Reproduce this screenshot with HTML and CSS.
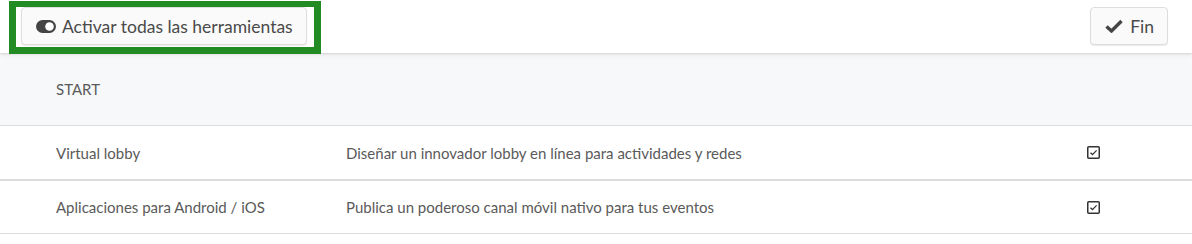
FILE: index.html
```html
<!DOCTYPE html>
<html lang="es">
<head>
    <meta charset="UTF-8">
    <title>Herramientas</title>
    <link rel="stylesheet" href="styles.css">
</head>
<body>
    <div class="toolbar">
        <div class="highlight">
            <button class="btn">
                <svg class="icon-toggle" viewBox="0 0 20 13" width="20" height="13">
                    <rect x="0" y="0" width="20" height="13" rx="6.5" fill="#444"/>
                    <circle cx="13.5" cy="6.5" r="4.3" fill="#fff"/>
                </svg>
                Activar todas las herramientas
            </button>
        </div>
        <button class="btn btn-fin">
            <svg class="icon-check" viewBox="0 0 18 14" width="18" height="14">
                <path d="M1.5 7.5 L6.5 12 L16.5 2" fill="none" stroke="#444" stroke-width="3.4"/>
            </svg>
            Fin
        </button>
    </div>

    <div class="tools">
        <div class="group-head">START</div>
        <div class="tool-row">
            <span>Virtual lobby</span>
            <span>Diseñar un innovador lobby en línea para actividades y redes</span>
            <span class="check">
                <svg viewBox="0 0 13 13" width="13" height="13">
                    <rect x="0.75" y="0.75" width="11.5" height="11.5" rx="1" fill="#fff" stroke="#333" stroke-width="1.5"/>
                    <path d="M3.5 6.8 L5.5 8.6 L9.6 4.4" fill="none" stroke="#333" stroke-width="1.3"/>
                </svg>
            </span>
        </div>
        <div class="tool-row last">
            <span>Aplicaciones para Android / iOS</span>
            <span>Publica un poderoso canal móvil nativo para tus eventos</span>
            <span class="check">
                <svg viewBox="0 0 13 13" width="13" height="13">
                    <rect x="0.75" y="0.75" width="11.5" height="11.5" rx="1" fill="#fff" stroke="#333" stroke-width="1.5"/>
                    <path d="M3.5 6.8 L5.5 8.6 L9.6 4.4" fill="none" stroke="#333" stroke-width="1.3"/>
                </svg>
            </span>
        </div>
    </div>
</body>
</html>
```

FILE: styles.css
```css
body {
    margin: 0;
    background-color: #fff;
    font-family: Lato, "Open Sans", sans-serif;
    color: #5a5a5a;
}

.toolbar {
    display: flex;
    justify-content: space-between;
    align-items: flex-start;
    height: 53px;
    padding: 0 24px 0 9px;
    background-color: #fff;
    position: relative;
    z-index: 1;
    box-shadow: 0 1px 2px rgba(0, 0, 0, 0.12), 0 3px 6px rgba(0, 0, 0, 0.04);
}

.highlight {
    box-sizing: border-box;
    height: 53px;
    margin-top: 1px;
    margin-bottom: -1px;
    padding: 0 7px 2px 5px;
    border: 7px solid #238b23;
    border-top-width: 6px;
    background-color: #fff;
}

.btn {
    display: flex;
    align-items: center;
    gap: 6px;
    height: 38px;
    box-sizing: border-box;
    padding: 0 13px 0 14px;
    border: 1px solid #ddd;
    border-radius: 4px;
    background-color: #fafafa;
    box-shadow: 0 1px 1px rgba(0, 0, 0, 0.08);
    font-family: inherit;
    font-size: 17.5px;
    color: #4a4a4a;
    cursor: pointer;
}

.btn-fin {
    margin-top: 7px;
    padding: 0 13px 0 14px;
    gap: 7px;
}

.icon-toggle,
.icon-check {
    display: block;
}

.tools {
    font-size: 15px;
}

.group-head {
    display: flex;
    align-items: center;
    box-sizing: border-box;
    height: 73px;
    padding-left: 56px;
    background-color: #f7f8fa;
    border-bottom: 1px solid #ddd;
}

.tool-row {
    display: grid;
    grid-template-columns: 290px 1fr 80px;
    align-items: center;
    height: 53px;
    padding: 0 25px 0 56px;
    border-bottom: 2px solid #dcdcdc;
}

.tool-row.last {
    height: 52px;
    border-bottom: 1px solid #ddd;
}

.check svg {
    display: block;
}
```
